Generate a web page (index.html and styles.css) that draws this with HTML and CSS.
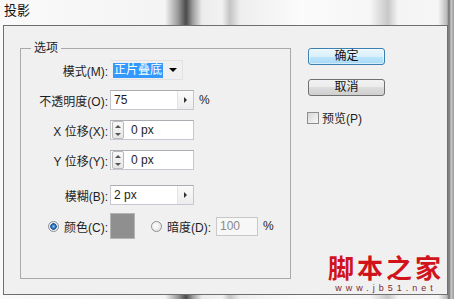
FILE: index.html
```html
<!DOCTYPE html>
<html lang="zh-CN">
<head>
    <meta charset="UTF-8">
    <title>投影</title>
    <link rel="stylesheet" href="styles.css">
</head>
<body>
<div class="titlebar">投影</div>
<div class="dialog">
    <fieldset class="group">
        <legend>选项</legend>
        <div class="row">
            <span class="lbl">模式(M):</span>
            <div class="select"><span class="sel-text">正片叠底</span><span class="arrow-down"></span></div>
        </div>
        <div class="row">
            <span class="lbl">不透明度(O):</span>
            <div class="field"><span class="val">75</span><span class="drop-btn"><span class="arrow-right"></span></span></div>
            <span class="unit">%</span>
        </div>
        <div class="row">
            <span class="lbl">X 位移(X):</span>
            <div class="field"><span class="spin"><i class="up"></i><i class="down"></i></span><span class="val">0 px</span></div>
        </div>
        <div class="row row-gap">
            <span class="lbl">Y 位移(Y):</span>
            <div class="field"><span class="spin"><i class="up"></i><i class="down"></i></span><span class="val">0 px</span></div>
        </div>
        <div class="row row-gap2">
            <span class="lbl">模糊(B):</span>
            <div class="field"><span class="val">2 px</span><span class="drop-btn"><span class="arrow-right"></span></span></div>
        </div>
        <div class="row row-color">
            <span class="lbl"><span class="radio checked"></span>颜色(C):</span>
            <span class="swatch"></span>
            <span class="radio-item"><span class="radio"></span>暗度(D):</span>
            <div class="field small disabled"><span class="val">100</span></div>
            <span class="unit">%</span>
        </div>
    </fieldset>
    <div class="side">
        <button class="btn btn-default">确定</button>
        <button class="btn">取消</button>
        <label class="check"><span class="box"></span>预览(P)</label>
    </div>
    <div class="watermark">
        <div class="wm-cn">脚本之家</div>
        <div class="wm-url">www.jb51.net</div>
    </div>
</div>
</body>
</html>
```

FILE: styles.css
```css
body {
    margin: 0;
    width: 454px;
    height: 299px;
    overflow: hidden;
    font-family: "Liberation Sans", "Noto Sans CJK SC", sans-serif;
    font-size: 12px;
    color: #1e1e1e;
    background: linear-gradient(to right, #fafafa 0, #f4f4f4 165px, #9a9a9a 178px, #4a4a4a 186px, #a0a0a0 193px, #ececec 202px, #f2f2f2 222px, #c4c4c4 230px, #eeeeee 240px, #fbfbfb 300px, #f6f6f6 370px, #c8c8c8 388px, #f4f4f4 398px, #f6f6f6 438px, #b8b8b8 447px, #6e6e6e 449px, #c8c8c8 451px, #9a9a9a 454px);
}
.titlebar {
    height: 25px;
    line-height: 22px;
    padding-left: 4px;
    font-size: 13px;
    color: #111;
}
.dialog {
    position: relative;
    margin-left: 3px;
    width: 445px;
    height: 270px;
    box-sizing: border-box;
    border: 1px solid #6f6f6f;
    background: #f0f0f0;
    display: flex;
    align-items: flex-start;
    padding: 15px 0 0 16px;
}
.group {
    margin: 0;
    padding: 5px 0 0 0;
    width: 271px;
    height: 238px;
    box-sizing: border-box;
    border: 1px solid #a9a9a9;
    min-width: 0;
}
.group legend {
    margin-left: 10px;
    padding: 0 3px;
    line-height: 14px;
    font-size: 12px;
}
.row {
    display: flex;
    align-items: center;
    height: 20px;
    margin-bottom: 10px;
}
.row-gap {
    margin-bottom: 15px;
}
.row-gap2 {
    margin-bottom: 8px;
}
.row-color {
    height: 26px;
}
.lbl {
    width: 87px;
    margin-right: 2px;
    text-align: right;
    white-space: nowrap;
    display: flex;
    justify-content: flex-end;
    align-items: center;
}
.select {
    width: 73px;
    height: 20px;
    box-sizing: border-box;
    border: 1px solid #e2e2e2;
    border-left-color: transparent;
    display: flex;
    align-items: center;
}
.sel-text {
    background: #3399ff;
    color: #fff;
    height: 15px;
    line-height: 15px;
    padding: 0 1px;
    margin-left: 2px;
}
.arrow-down {
    margin-left: auto;
    margin-right: 5px;
    width: 0;
    height: 0;
    border-left: 4px solid transparent;
    border-right: 4px solid transparent;
    border-top: 4px solid #000;
}
.field {
    width: 84px;
    height: 20px;
    box-sizing: border-box;
    border: 1px solid #c5c8ce;
    border-top-color: #abadb3;
    background: #fff;
    display: flex;
    align-items: center;
}
.val {
    padding-left: 3px;
}
.drop-btn {
    margin-left: auto;
    width: 15px;
    height: 18px;
    border-left: 1px solid #e4e4e4;
    background: linear-gradient(#fbfbfb, #ececec);
    display: flex;
    align-items: center;
    justify-content: center;
}
.arrow-right {
    width: 0;
    height: 0;
    border-top: 3px solid transparent;
    border-bottom: 3px solid transparent;
    border-left: 3px solid #333;
}
.spin {
    width: 10px;
    height: 16px;
    margin: 0 4px 0 1px;
    border: 1px solid #b9b9b9;
    border-radius: 2px;
    background: linear-gradient(#f9f9f9, #e6e6e6);
    display: flex;
    flex-direction: column;
    align-items: center;
    justify-content: space-around;
}
.spin i {
    width: 0;
    height: 0;
    border-left: 3px solid transparent;
    border-right: 3px solid transparent;
}
.spin .up {
    border-bottom: 3px solid #555;
}
.spin .down {
    border-top: 3px solid #555;
}
.unit {
    margin-left: 5px;
}
.radio {
    display: inline-block;
    width: 11px;
    height: 11px;
    box-sizing: border-box;
    border: 1px solid #8e8f8f;
    border-radius: 50%;
    background: radial-gradient(circle at 40% 40%, #ffffff, #dcdcdc);
    margin-right: 5px;
}
.radio.checked {
    background: radial-gradient(circle, #9ad0f5 0, #2a6ab8 2px, #1c5aa8 3px, #e8e8e8 3.5px, #f4f4f4 100%);
}
.swatch {
    width: 25px;
    height: 26px;
    box-sizing: border-box;
    background: #8f8f8f;
    border: 1px solid #b4b4b4;
}
.radio-item {
    display: flex;
    align-items: center;
    margin-left: 16px;
    margin-right: 5px;
}
.field.small {
    width: 42px;
    height: 19px;
}
.field.disabled {
    background: #f7f7f7;
    border-color: #c9c9c9;
    color: #8a8a8a;
}
.side {
    margin-left: 17px;
    padding-top: 7px;
    width: 77px;
    display: flex;
    flex-direction: column;
}
.btn {
    width: 77px;
    height: 17px;
    padding: 0;
    font-family: inherit;
    font-size: 12px;
    line-height: 15px;
    color: #111;
    border: 1px solid #707070;
    border-radius: 3px;
    background: linear-gradient(#f2f2f2 0, #ebebeb 50%, #dddddd 50%, #cfcfcf 100%);
}
.btn + .btn {
    margin-top: 14px;
}
.btn-default {
    border-color: #3c7fb1;
    background: linear-gradient(#eaf6fd 0, #d9f0fc 50%, #bee6fd 50%, #a7d9f5 100%);
    box-shadow: inset 0 0 0 1px rgba(255, 255, 255, 0.5);
}
.check {
    margin-top: 13px;
    display: flex;
    align-items: center;
    margin-left: -1px;
}
.box {
    width: 12px;
    height: 12px;
    box-sizing: border-box;
    border: 1px solid #8e8f8f;
    background: linear-gradient(135deg, #d8d8d8, #f8f8f8);
    margin-right: 3px;
}
.watermark {
    position: absolute;
    right: 3px;
    bottom: 1px;
    text-align: center;
}
.wm-cn {
    font-size: 26px;
    line-height: 30px;
    letter-spacing: 3px;
    font-weight: bold;
    color: #d1141c;
}
.wm-url {
    font-size: 9px;
    line-height: 9px;
    letter-spacing: 4px;
    color: #7a2a2a;
}
```
